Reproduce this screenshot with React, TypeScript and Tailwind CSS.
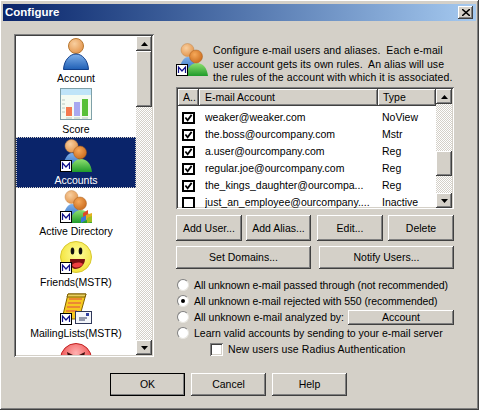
import React from "react";

const raised = "bg-[#d4d0c8] shadow-[inset_-1px_-1px_0_#404040,inset_1px_1px_0_#ffffff,inset_-2px_-2px_0_#808080,inset_2px_2px_0_#d4d0c8]";
const sunken = "shadow-[inset_1px_1px_0_#808080,inset_-1px_-1px_0_#ffffff,inset_2px_2px_0_#404040,inset_-2px_-2px_0_#d4d0c8]";
const track = "bg-[repeating-conic-gradient(#d4d0c8_0%_25%,#ffffff_0%_50%)] bg-[length:2px_2px]";

function Defs() {
  return (
    <svg width="0" height="0" className="block h-0 w-0">
      <defs>
        <radialGradient id="skin" cx="40%" cy="35%" r="70%"><stop offset="0" stopColor="#f8cfa0" /><stop offset="1" stopColor="#e2934a" /></radialGradient>
        <radialGradient id="skin2" cx="40%" cy="35%" r="70%"><stop offset="0" stopColor="#f6a95a" /><stop offset="1" stopColor="#c96a1c" /></radialGradient>
        <linearGradient id="blue" x1="0" y1="0" x2="0" y2="1"><stop offset="0" stopColor="#7fb0ea" /><stop offset="1" stopColor="#1f5fb5" /></linearGradient>
        <linearGradient id="green" x1="0" y1="0" x2="0" y2="1"><stop offset="0" stopColor="#8fe070" /><stop offset="1" stopColor="#1f9a2a" /></linearGradient>
        <radialGradient id="yel" cx="55%" cy="40%" r="65%"><stop offset="0" stopColor="#ffffa0" /><stop offset="1" stopColor="#f2e030" /></radialGradient>
        <radialGradient id="red" cx="50%" cy="30%" r="70%"><stop offset="0" stopColor="#ffb0b0" /><stop offset="1" stopColor="#e83030" /></radialGradient>
      </defs>
    </svg>
  );
}

function MBadge() {
  return (
    <g>
      <rect x="0.5" y="21.5" width="11" height="11" fill="#fff" stroke="#000" />
      <path d="M2.5 30V24L6 28L9.5 24V30" fill="none" stroke="#10108a" strokeWidth="1.2" />
    </g>
  );
}

function People({ badge = true, flag = false, className = "" }: { badge?: boolean; flag?: boolean; className?: string }) {
  return (
    <svg width="32" height="33" viewBox="0 0 32 33" className={className}>
      <circle cx="11.5" cy="7" r="6.5" fill="url(#skin)" stroke="#c08850" strokeWidth=".5" />
      <path d="M3 31C3 20 8 14 12 14S20 19 21 31Z" fill="url(#blue)" />
      <path d="M10 33C11 25 15 20 21 20S31 25 32 33Z" fill="url(#green)" />
      <circle cx="20" cy="13.5" r="6.5" fill="url(#skin2)" stroke="#a85c18" strokeWidth=".5" />
      {flag && (
        <g>
          <path d="M21 28L26 25V30L21 33Z" fill="#3a78d8" />
          <path d="M26 25L32 23V28L26 30Z" fill="#e2b020" />
          <path d="M23 23L28 20V24L23 27Z" fill="#e04828" />
          <path d="M27 28L32 26V32L27 33Z" fill="#a0c020" />
        </g>
      )}
      {badge && <MBadge />}
    </svg>
  );
}

function AccountIcon() {
  return (
    <svg width="32" height="33" viewBox="0 0 32 33">
      <circle cx="16" cy="9" r="7.5" fill="url(#skin)" stroke="#b87830" />
      <path d="M3.5 32.5C4 23 10 17 16 17S28 23 28.5 32.5Z" fill="url(#blue)" stroke="#123f8a" />
    </svg>
  );
}

function ScoreIcon() {
  return (
    <svg width="32" height="32" viewBox="0 0 32 32">
      <rect x=".5" y=".5" width="31" height="31" fill="#f4fbf2" stroke="#7fa0a8" />
      <rect x="1" y="1" width="30" height="6" fill="#bfe4f8" />
      <rect x="6" y="19" width="6" height="9" fill="#f47a50" />
      <rect x="14" y="14" width="6" height="14" fill="#a8a8f0" />
      <rect x="22" y="11" width="6" height="17" fill="#58c038" />
      <path d="M2 12H5M2 16H5M2 20H5M2 24H5M6 30H12M14 30H20M22 30H28" stroke="#b8c8c0" />
    </svg>
  );
}

function SmileIcon() {
  return (
    <svg width="32" height="33" viewBox="0 0 32 33">
      <circle cx="16" cy="16" r="15.5" fill="url(#yel)" stroke="#d8c830" />
      <ellipse cx="12.5" cy="10" rx="1.8" ry="3.5" fill="#111" />
      <ellipse cx="20.5" cy="10" rx="1.8" ry="3.5" fill="#111" />
      <path d="M10 18H25C25 24 20 28 15 28C12 28 10 24 10 18Z" fill="#7a1010" />
      <path d="M12 24C15 21 20 21 23 23C21 27 14 28 12 24Z" fill="#f04040" />
      <MBadge />
    </svg>
  );
}

function ListIcon() {
  return (
    <svg width="32" height="33" viewBox="0 0 32 33">
      <path d="M8 2H26L19 27H2Z" fill="#f6c820" stroke="#806000" />
      <path d="M9 7H22M8 11H21M7 15H20M6 19H17" stroke="#e04848" />
      <path d="M8 2H26L25 5H7Z" fill="#e8d060" stroke="#806000" />
      <rect x="15.5" y="19.5" width="16" height="12" fill="#f4f6fa" stroke="#30385a" />
      <path d="M19 26H27M19 28H25" stroke="#30385a" />
      <rect x="26" y="21" width="3" height="3" fill="#3040a0" />
      <MBadge />
    </svg>
  );
}

function RedIcon() {
  return (
    <svg width="32" height="14" viewBox="0 0 32 14" className="block">
      <circle cx="16" cy="16" r="15.5" fill="url(#red)" stroke="#c02020" />
      <path d="M7 9L13 12L12 14H8ZM25 9L19 12L20 14H24Z" fill="#401010" />
    </svg>
  );
}

function ScrollBtn({ down = false, h = "h-[15px]" }: { down?: boolean; h?: string }) {
  return (
    <div className={`${raised} ${h} w-full shrink-0 flex items-center justify-center`}>
      <svg width="7" height="4" viewBox="0 0 7 4">
        <path d={down ? "M0 0H7L3.5 4Z" : "M0 4H7L3.5 0Z"} fill="#000" />
      </svg>
    </div>
  );
}

function NavItem({ label, selected = false, children }: { label: string; selected?: boolean; children: React.ReactNode }) {
  return (
    <div className={`h-[51px] shrink-0 flex flex-col items-center pt-[2px] ${selected ? "bg-[#0a246a] text-white outline-1 -outline-offset-1 outline-dotted outline-[#d4d0c8]" : "text-black"}`}>
      <div className="h-[33px] flex items-start">{children}</div>
      <div className="leading-[13px] mt-[2px]">{label}</div>
    </div>
  );
}

function Btn({ label, w, h = "h-[23px]", cls = "", isDefault = false }: { label: string; w: string; h?: string; cls?: string; isDefault?: boolean }) {
  return (
    <div className={`${w} ${h} ${raised} ${cls} ${isDefault ? "outline-1 -outline-offset-1 outline-black" : ""} flex items-center justify-center shrink-0`}>
      {label}
    </div>
  );
}

function Check({ on }: { on: boolean }) {
  return (
    <div className="w-[13px] h-[12px] border-2 border-black bg-white flex items-center justify-center shrink-0">
      {on && (
        <svg width="9" height="8" viewBox="0 0 9 9">
          <path d="M1 4L3.5 7L8 1" fill="none" stroke="#000" strokeWidth="2" />
        </svg>
      )}
    </div>
  );
}

function Row({ on, email, type }: { on: boolean; email: string; type: string }) {
  return (
    <div className="h-[17px] flex items-center shrink-0">
      <div className="w-[27px] pl-[4px]"><Check on={on} /></div>
      <div className="w-[177px] whitespace-nowrap overflow-hidden">{email}</div>
      <div>{type}</div>
    </div>
  );
}

function Radio({ on, label, tight = false, children }: { on: boolean; label: string; tight?: boolean; children?: React.ReactNode }) {
  return (
    <div className="h-[16px] flex items-center shrink-0">
      <div className="w-[12px] h-[12px] rounded-full bg-white border border-t-[#808080] border-l-[#808080] border-r-[#e8e6e0] border-b-[#e8e6e0] flex items-center justify-center shrink-0 ml-[1px] mr-[5px]">
        {on && <div className="w-[4px] h-[4px] rounded-full bg-black" />}
      </div>
      <div className={`whitespace-nowrap ${tight ? "tracking-[-0.08px]" : ""}`}>{label}</div>
      {children}
    </div>
  );
}

export default function App() {
  return (
    <div className={`w-[479px] h-[410px] ${raised} p-[3px] flex flex-col overflow-hidden text-[10.5px] leading-[13px] text-black font-['Liberation_Sans',Arial,sans-serif]`}>
      <Defs />
      <div className="h-[17px] mt-[1px] shrink-0 flex items-center justify-between pl-[2px] pr-[3px] bg-gradient-to-r from-[#0a246a] to-[#a6caf0]">
        <div className="text-white font-bold text-[11.5px]">Configure</div>
        <div className={`${raised} w-[15px] h-[13px] flex items-center justify-center`}>
          <svg width="8" height="7" viewBox="0 0 8 7"><path d="M0 0L8 7M8 0L0 7" stroke="#000" strokeWidth="1.5" /></svg>
        </div>
      </div>

      <div className="flex pl-[11px] pt-[13px] shrink-0">
        <div className={`w-[140px] h-[323px] p-[2px] flex ${sunken} bg-white shrink-0`}>
          <div className="w-[120px] h-[319px] overflow-hidden flex flex-col">
            <div className="-mt-[1px] flex flex-col">
              <NavItem label="Account"><AccountIcon /></NavItem>
              <NavItem label="Score"><ScoreIcon /></NavItem>
              <NavItem label="Accounts" selected><People /></NavItem>
              <NavItem label="Active Directory"><People flag /></NavItem>
              <NavItem label="Friends(MSTR)"><SmileIcon /></NavItem>
              <NavItem label="MailingLists(MSTR)"><ListIcon /></NavItem>
              <NavItem label=""><RedIcon /></NavItem>
            </div>
          </div>
          <div className={`w-[16px] h-[319px] flex flex-col ${track}`}>
            <ScrollBtn />
            <div className={`${raised} h-[56px] shrink-0`} />
            <div className="flex-1" />
            <ScrollBtn down />
          </div>
        </div>

        <div className="w-[278px] ml-[22px] pt-[9px] flex flex-col shrink-0">
          <div className="flex h-[44px] shrink-0">
            <People className="block shrink-0" />
            <div className="ml-[5px] pt-[1px] leading-[13.5px] whitespace-nowrap tracking-[0.08px]">
              <div>Configure e-mail users and aliases.&nbsp; Each e-mail</div>
              <div>user account gets its own rules.&nbsp; An alias will use</div>
              <div>the rules of the account with which it is associated.</div>
            </div>
          </div>

          <div className={`h-[122px] p-[2px] pb-[1px] flex ${sunken} bg-white shrink-0`}>
            <div className="w-[258px] flex flex-col overflow-hidden">
              <div className="h-[17px] flex shrink-0">
                <div className={`${raised} w-[21px] pl-[5px] flex items-center`}>A..</div>
                <div className={`${raised} w-[179px] pl-[6px] flex items-center`}>E-mail Account</div>
                <div className={`${raised} w-[58px] pl-[5px] flex items-center`}>Type</div>
              </div>
              <div className="h-[3px] shrink-0" />
              <Row on email="weaker@weaker.com" type="NoView" />
              <Row on email="the.boss@ourcompany.com" type="Mstr" />
              <Row on email="a.user@ourcompany.com" type="Reg" />
              <Row on email="regular.joe@ourcompany.com" type="Reg" />
              <Row on email="the_kings_daughter@ourcompa..." type="Reg" />
              <Row on={false} email="just_an_employee@ourcompany...." type="Inactive" />
            </div>
            <div className={`w-[16px] flex flex-col ${track}`}>
              <ScrollBtn />
              <div className="h-[47px] shrink-0" />
              <div className={`${raised} h-[25px] shrink-0`} />
              <div className="flex-1" />
              <ScrollBtn down />
            </div>
          </div>

          <div className="flex mt-[6px] shrink-0">
            <Btn label="Add User..." w="w-[66px]" h="h-[26px]" />
            <Btn label="Add Alias..." w="w-[65px]" h="h-[26px]" cls="ml-[4px]" />
            <Btn label="Edit..." w="w-[66px]" h="h-[26px]" cls="ml-[6px]" />
            <Btn label="Delete" w="w-[66px]" h="h-[26px]" cls="ml-[5px]" />
          </div>
          <div className="flex justify-between mt-[5px] shrink-0">
            <Btn label="Set Domains..." w="w-[135px]" />
            <Btn label="Notify Users..." w="w-[135px]" />
          </div>

          <div className="flex flex-col mt-[8px] shrink-0">
            <Radio on={false} tight label="All unknown e-mail passed through (not recommended)" />
            <Radio on tight label="All unknown e-mail rejected with 550 (recommended)" />
            <Radio on={false} label="All unknown e-mail analyzed by:">
              <Btn label="Account" w="w-[106px]" h="h-[15px]" cls="ml-auto" />
            </Radio>
            <Radio on={false} label="Learn valid accounts by sending to your e-mail server" />
            <div className="h-[16px] flex items-center pl-[34px] shrink-0">
              <div className={`w-[13px] h-[13px] bg-white ${sunken} shrink-0 mr-[5px]`} />
              <div className="whitespace-nowrap tracking-[0.1px]">New users use Radius Authentication</div>
            </div>
          </div>
        </div>
      </div>

      <div className="flex pl-[107px] pt-[16px] gap-[6px] shrink-0">
        <Btn label="OK" w="w-[75px]" isDefault />
        <Btn label="Cancel" w="w-[75px]" />
        <Btn label="Help" w="w-[75px]" />
      </div>
    </div>
  );
}
